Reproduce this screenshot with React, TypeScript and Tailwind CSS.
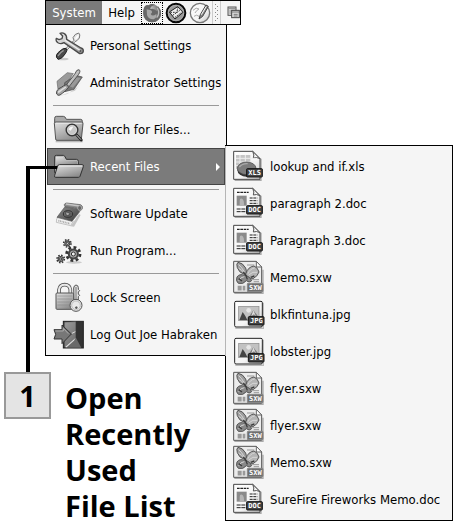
import React from "react";

type IconProps = { children: React.ReactNode };

// every menu icon is drawn on a 90 unit grid
function Icon({ children }: IconProps) {
  return (
    <svg viewBox="0 0 90 90" className="size-[30px] shrink-0 overflow-visible" aria-hidden="true">
      {children}
    </svg>
  );
}

function Gradients() {
  return (
    <svg className="absolute size-0" aria-hidden="true">
      <defs>
        <linearGradient id="metal" x1="0" y1="0" x2="1" y2="1">
          <stop offset="0" stopColor="#f4f4f4" />
          <stop offset="1" stopColor="#8a8a8a" />
        </linearGradient>
        <linearGradient id="folder" x1="0" y1="0" x2="0.6" y2="1">
          <stop offset="0" stopColor="#e2e2e2" />
          <stop offset="1" stopColor="#8c8c8c" />
        </linearGradient>
        <linearGradient id="dark" x1="0" y1="0" x2="1" y2="1">
          <stop offset="0" stopColor="#8d8d8d" />
          <stop offset="1" stopColor="#3c3c3c" />
        </linearGradient>
        <linearGradient id="page" x1="0" y1="0" x2="1" y2="1">
          <stop offset="0" stopColor="#ffffff" />
          <stop offset="0.6" stopColor="#f4f4f4" />
          <stop offset="1" stopColor="#c4c4c4" />
        </linearGradient>
        <radialGradient id="ball" cx="0.35" cy="0.3" r="0.8">
          <stop offset="0" stopColor="#dddddd" />
          <stop offset="0.5" stopColor="#8a8a8a" />
          <stop offset="1" stopColor="#444444" />
        </radialGradient>
      </defs>
    </svg>
  );
}

function ToolsIcon() {
  return (
    <Icon>
      <ellipse cx="26" cy="84" rx="18" ry="4" fill="#c8c8c8" />
      <path d="M34 54 60 28 57 20Q62 8 74 6Q80 10 76 21Q70 30 63 32L38 58Z" fill="#e6e6e6" stroke="#777" strokeWidth="3" />
      <path d="M64 21Q69 12 74 11Q75 18 64 26Z" fill="#fff" />
      <path d="M8 80Q4 70 18 60Q28 50 36 52Q42 58 34 68Q24 84 13 85Z" fill="#4a4a4a" stroke="#222" strokeWidth="3" />
      <path d="M12 75Q18 64 29 58" fill="none" stroke="#999" strokeWidth="4" />
      <path
        d="M7 22Q4 31 13 36Q22 40 30 35L77 68Q87 69 88 60Q88 53 81 51L38 25Q39 13 31 8Q25 4 18 7L26 15 24 23 15 26Z"
        fill="url(#metal)"
        stroke="#4a4a4a"
        strokeWidth="4"
        strokeLinejoin="round"
      />
      <path d="M32 27 78 58" stroke="#eee" strokeWidth="4" />
      <circle cx="79" cy="60" r="3" fill="#555" />
    </Icon>
  );
}

function AdminIcon() {
  return (
    <Icon>
      <path d="M15 84 63 68 84 40 70 58 40 78Z" fill="#cccccc" />
      <path d="M9 40 40 14 58 17 28 58 12 64Z" fill="#9b9b9b" stroke="#666" strokeWidth="2" />
      <path d="M32 44 65 22 85 27 60 64 32 71Z" fill="#777" stroke="#444" strokeWidth="2" />
      <path d="M36 50 66 28 80 30 57 59Z" fill="#999" />
      <path d="M36 52 62 19Q68 3 75 5Q81 8 74 19L42 60Z" fill="url(#metal)" stroke="#555" strokeWidth="3" />
      <path d="M8 78Q5 65 22 58Q36 47 42 52Q47 58 36 67Q24 77 18 81Q11 84 8 78Z" fill="#a4a4a4" stroke="#4b4b4b" strokeWidth="3" />
      <path d="M14 72Q23 65 34 58" fill="none" stroke="#dedede" strokeWidth="5" strokeLinecap="round" />
    </Icon>
  );
}

function SearchFolderIcon() {
  return (
    <Icon>
      <path d="M5 79H86" stroke="#bbb" strokeWidth="6" />
      <path d="M2 10Q2 4 7 4H28Q34 4 37 13H80Q85 13 85 19V30H2Z" fill="#aaa" stroke="#555" strokeWidth="3" />
      <path d="M1 25Q1 21 6 21H82Q88 21 87 26L82 73Q82 76 78 76H9Q5 76 5 72Z" fill="url(#folder)" stroke="#555" strokeWidth="3" />
      <path d="M5 25H83" stroke="#e7e7e7" strokeWidth="3" />
      <path d="M67 59 82 75" stroke="#222" strokeWidth="8" strokeLinecap="round" />
      <path d="M67 59 81 74" stroke="#ccc" strokeWidth="3" />
      <circle cx="54" cy="45" r="17" fill="#c7c7c7" stroke="#333" strokeWidth="5" />
      <circle cx="54" cy="45" r="14" fill="none" stroke="#eee" strokeWidth="2" />
      <path d="M43 43Q48 33 58 35L50 47Z" fill="#f8f8f8" />
    </Icon>
  );
}

function OpenFolderIcon() {
  return (
    <Icon>
      <path d="M2 15Q2 10 7 10H28Q33 10 37 22H67Q73 22 73 28V62H2Z" fill="#bcbcbc" stroke="#303030" strokeWidth="3" />
      <path d="M6 15H27L33 26H69V42H6Z" fill="url(#folder)" />
      <path d="M16 38H85Q90 38 88 44L78 73Q77 76 73 76H5Q0 76 2 70L11 42Q12 38 16 38Z" fill="url(#folder)" stroke="#303030" strokeWidth="3" />
      <path d="M16 42H84" stroke="#f0f0f0" strokeWidth="3" />
    </Icon>
  );
}

function UpdateIcon() {
  return (
    <Icon>
      <path d="M50 82 75 45 80 48 60 83Z" fill="#c4c4c4" />
      <path d="M8 59 17 52 58 66 50 80 7 70Z" fill="#f2f2f2" stroke="#aaa" strokeWidth="2" />
      <path d="M13 65 48 74" stroke="#aaa" strokeWidth="5" strokeDasharray="3 2" />
      <path d="M9 55 33 23 73 30 77 38 54 67Z" fill="url(#dark)" stroke="#555" strokeWidth="2" />
      <path d="M33 23Q27 14 38 12L80 17Q87 20 85 29Q82 36 75 35Q70 25 61 26Z" fill="#8b8b8b" stroke="#555" strokeWidth="2" />
      <path d="M36 15 76 21" stroke="#c5c5c5" strokeWidth="4" />
      <ellipse cx="77" cy="27" rx="6" ry="7" fill="#666" stroke="#bbb" strokeWidth="2" />
      <ellipse cx="42" cy="45" rx="14" ry="10" fill="none" stroke="#333" strokeWidth="3" />
      <path d="M36 38 48 43 42 51 35 46Z" fill="#aaa" stroke="#333" strokeWidth="2" />
    </Icon>
  );
}

function Gear({ cx, cy, r }: { cx: number; cy: number; r: number }) {
  return (
    <g>
      <circle cx={cx} cy={cy} r={r} fill="none" stroke="#333" strokeWidth={r * 0.42} strokeDasharray={`${r * 0.42} ${r * 0.365}`} />
      <circle cx={cx} cy={cy} r={r * 0.68} fill="#aaa" stroke="#444" strokeWidth={r * 0.3} />
      <circle cx={cx} cy={cy} r={r * 0.3} fill="#eee" stroke="#333" strokeWidth="3" />
    </g>
  );
}

function GearsIcon() {
  return (
    <Icon>
      <ellipse cx="60" cy="79" rx="24" ry="4" fill="#ccc" />
      <Gear cx={40} cy={22} r={11} />
      <Gear cx={20} cy={69} r={11} />
      <Gear cx={58} cy={54} r={20} />
    </Icon>
  );
}

function LockIcon() {
  return (
    <Icon>
      <path d="M15 32V20Q17 5 32 5Q47 5 49 20V32" fill="none" stroke="#555" strokeWidth="11" />
      <path d="M15 32V20Q17 5 32 5Q47 5 49 20V32" fill="none" stroke="#e8e8e8" strokeWidth="6" />
      <rect x="6" y="30" width="53" height="49" rx="3" fill="url(#folder)" stroke="#555" strokeWidth="3" />
      <path d="M10 39H55M10 48H55M10 57H55M10 66H55" stroke="#8c8c8c" strokeWidth="2" />
      <path d="M60 51 59 15Q60 7 66 6Q73 7 73 14V19L77 23 73 27V33L77 37 73 41V51Z" fill="#ddd" stroke="#555" strokeWidth="3" />
      <path d="M66 12V49" stroke="#777" strokeWidth="3" />
      <circle cx="66" cy="67" r="18" fill="#e8e8e8" stroke="#555" strokeWidth="3" />
      <circle cx="66" cy="67" r="13" fill="none" stroke="#bbb" strokeWidth="3" />
      <circle cx="67" cy="74" r="5" fill="#555" stroke="#fff" strokeWidth="2" />
    </Icon>
  );
}

function LogOutIcon() {
  return (
    <Icon>
      <rect x="28" y="4" width="60" height="80" fill="#333" stroke="#222" strokeWidth="3" />
      <path d="M32 7 65 5V53L32 82Z" fill="url(#folder)" stroke="#555" strokeWidth="1" />
      <path d="M32 7 65 5V53L32 82Z" fill="#555" fillOpacity="0.5" />
      <path d="M65 52 82 83H33Z" fill="#6a6a6a" />
      <path d="M33 81 65 53 60 62 38 82Z" fill="#ddd" />
      <path d="M54 40 64 35" stroke="#ddd" strokeWidth="3" />
      <path d="M0 29H24V15L52 42 24 71V57H0L5 43Z" fill="#777" stroke="#333" strokeWidth="3" />
      <path d="M4 33H28V25L43 41" fill="none" stroke="#aaa" strokeWidth="3" />
    </Icon>
  );
}

function Page() {
  return (
    <>
      <path d="M5 85H84V20" fill="none" stroke="#aaa" strokeWidth="4" />
      <path d="M2 -2H59L81 20V82H2Z" fill="url(#page)" stroke="#444" strokeWidth="3" />
      <path d="M59 -2Q65 10 61 18Q70 14 81 20Z" fill="#f2f2f2" stroke="#555" strokeWidth="3" />
    </>
  );
}

function Badge({ x, y, label, light }: { x: number; y: number; label: string; light?: boolean }) {
  return (
    <g>
      <rect x={x} y={y} width="47" height="25" rx="2" fill={light ? "#6f6f6f" : "#444"} stroke={light ? "#888" : "#111"} strokeWidth="3" />
      <text x={x + 24} y={y + 20} textAnchor="middle" fontSize="21" fontWeight="700" fill="#fff" className="font-['DejaVu_Sans_Mono',monospace]">
        {label}
      </text>
    </g>
  );
}

function XlsIcon() {
  return (
    <Icon>
      <Page />
      <path d="M9 9H54V50H9Z" fill="#c4c4c4" />
      <path d="M9 19H70M9 30H70M9 41H70M21 9V55M37 9V55M53 9V55" stroke="#eee" strokeWidth="3" />
      <ellipse cx="41" cy="54" rx="28" ry="20" fill="#333" />
      <ellipse cx="41" cy="49" rx="28" ry="19" fill="#7c7c7c" stroke="#444" strokeWidth="2" />
      <path d="M19 45Q28 34 44 35" fill="none" stroke="#aaa" strokeWidth="4" />
      <Badge x={41} y={50} label="XLS" />
    </Icon>
  );
}

function DocIcon() {
  return (
    <Icon>
      <Page />
      <path d="M12 10H47" stroke="#222" strokeWidth="4" strokeDasharray="8 2" />
      <rect x="11" y="20" width="30" height="30" fill="#8a8a8a" />
      <path d="M20 50V36Q20 27 27 29Q34 32 33 50" fill="#b5b5b5" />
      <path d="M50 27H73M50 35H73M50 43H73" stroke="#222" strokeWidth="3" strokeDasharray="9 2" />
      <path d="M11 60H40M11 68H40" stroke="#222" strokeWidth="3" strokeDasharray="12 2" />
      <Badge x={41} y={50} label="DOC" />
    </Icon>
  );
}

function SxwIcon() {
  return (
    <Icon>
      <path d="M4 91H90V20" fill="none" stroke="#aaa" strokeWidth="4" />
      <path d="M2 -5H70L86 12V88H2Z" fill="#ececec" stroke="#555" strokeWidth="3" />
      <path d="M70 -5V12H86Z" fill="#fff" stroke="#666" strokeWidth="3" />
      <path d="M42 6H64M58 50H78M62 56H78" stroke="#999" strokeWidth="3" />
      <path d="M14 72H37M14 79H37" stroke="#999" strokeWidth="7" strokeDasharray="12 3" />
      <path d="M34 34Q18 29 13 14Q9 2 15 -2Q29 -1 38 15Q41 23 40 31Z" fill="#a0a0a0" stroke="#555" strokeWidth="3" />
      <path d="M38 33Q45 11 63 9Q74 13 78 27Q74 40 60 47Q47 51 39 41Z" fill="#b4b4b4" stroke="#555" strokeWidth="3" />
      <path d="M35 37Q19 31 12 42Q7 54 16 61Q31 65 40 53Q49 61 56 53Q53 43 39 37Z" fill="#898989" stroke="#555" strokeWidth="3" />
      <path d="M17 5Q25 10 34 27M17 16Q25 19 32 28M45 32Q51 17 65 15M47 36Q60 24 72 28M17 53Q23 42 34 41" fill="none" stroke="#d6d6d6" strokeWidth="3" />
      <path d="M31 27Q39 35 43 49M53 43 64 39M17 47 27 54" fill="none" stroke="#3c3c3c" strokeWidth="4" />
      <Badge x={43} y={61} label="SXW" light />
    </Icon>
  );
}

function JpgIcon() {
  return (
    <Icon>
      <path d="M7 85H91V8" fill="none" stroke="#bbb" strokeWidth="4" />
      <rect x="5" y="4" width="83" height="77" rx="4" fill="url(#page)" stroke="#222" strokeWidth="3" />
      <rect x="17" y="19" width="61" height="43" fill="#c2c2c2" stroke="#888" strokeWidth="2" />
      <circle cx="47" cy="31" r="7" fill="#e6e6e6" />
      <path d="M19 60 29 36 37 48 43 60Z" fill="#444" />
      <path d="M42 59 61 31 77 51V60Z" fill="#777" />
      <path d="M61 31 55 48 63 43 69 49Z" fill="#ddd" />
      <Badge x={46} y={50} label="JPG" />
    </Icon>
  );
}

const menuGroups = [
  [
    { label: "Personal Settings", icon: <ToolsIcon /> },
    { label: "Administrator Settings", icon: <AdminIcon /> },
  ],
  [
    { label: "Search for Files...", icon: <SearchFolderIcon /> },
    { label: "Recent Files", icon: <OpenFolderIcon />, open: true },
  ],
  [
    { label: "Software Update", icon: <UpdateIcon /> },
    { label: "Run Program...", icon: <GearsIcon /> },
  ],
  [
    { label: "Lock Screen", icon: <LockIcon /> },
    { label: "Log Out Joe Habraken", icon: <LogOutIcon /> },
  ],
];

const recentFiles = [
  { label: "lookup and if.xls", icon: <XlsIcon /> },
  { label: "paragraph 2.doc", icon: <DocIcon /> },
  { label: "Paragraph 3.doc", icon: <DocIcon /> },
  { label: "Memo.sxw", icon: <SxwIcon /> },
  { label: "blkfintuna.jpg", icon: <JpgIcon /> },
  { label: "lobster.jpg", icon: <JpgIcon /> },
  { label: "flyer.sxw", icon: <SxwIcon /> },
  { label: "flyer.sxw", icon: <SxwIcon /> },
  { label: "Memo.sxw", icon: <SxwIcon /> },
  { label: "SureFire Fireworks Memo.doc", icon: <DocIcon /> },
];

function MenuBar() {
  return (
    <nav className="flex h-[25px] w-[196px] items-center border border-black bg-[#f5f5f5]">
      <button className="h-full w-14 shrink-0 bg-[#7b7b7b] text-white">System</button>
      <button className="h-full w-[39px] shrink-0">Help</button>
      <button aria-label="Web Browser" className="flex size-[22px] shrink-0 items-center justify-center border border-dotted border-black">
        <svg viewBox="0 0 60 60" className="size-5">
          <circle cx="30" cy="31" r="27" fill="url(#ball)" />
          <path d="M5 17Q9 3 20 7Q27 0 40 5Q24 9 25 18Q36 14 45 25Q50 16 48 9Q61 24 55 42Q47 58 30 58Q12 57 6 40Q2 27 5 17Z" fill="#686868" />
          <path d="M14 19 27 22Q34 28 26 33Q31 42 43 33Q46 44 35 49Q20 50 15 36Z" fill="#a8a8a8" />
          <path d="M46 15Q55 31 44 44" fill="none" stroke="#bbb" strokeWidth="4" />
        </svg>
      </button>
      <button aria-label="Mail" className="ml-0.5 shrink-0">
        <svg viewBox="0 0 66 66" className="size-[22px]">
          <circle cx="33" cy="33" r="28" fill="#999" stroke="#080808" strokeWidth="6" />
          <circle cx="33" cy="33" r="23" fill="none" stroke="#aaa" strokeWidth="3" />
          <path d="M13 30 38 14 54 31 30 51Z" fill="#eee" stroke="#222" strokeWidth="3" />
          <path d="M16 31 36 31 38 16M23 40 45 25M30 46 50 31" fill="none" stroke="#333" strokeWidth="3" strokeDasharray="5 3" />
        </svg>
      </button>
      <button aria-label="Word Processor" className="ml-0.5 shrink-0">
        <svg viewBox="0 0 66 66" className="size-[22px]">
          <circle cx="33" cy="33" r="29" fill="url(#page)" stroke="#777" strokeWidth="4" />
          <path d="M12 25Q22 14 30 21Q22 25 18 33M15 43Q23 36 30 43" fill="none" stroke="#aaa" strokeWidth="3" />
          <path d="M30 51 34 38 51 9 58 13 41 43Z" fill="#888" stroke="#444" strokeWidth="3" />
          <path d="M37 38 52 13" stroke="#fff" strokeWidth="3" />
        </svg>
      </button>
      <svg viewBox="0 0 9 23" className="ml-px h-[23px] w-[9px] shrink-0" aria-hidden="true">
        <path d="M.5 0V23M8.500 0V23" stroke="#ccc" />
        <path d="M3.500 3V21" stroke="#888" strokeDasharray="1 3" />
        <path d="M5.500 5V21" stroke="#888" strokeDasharray="1 3" />
      </svg>
      <button aria-label="Window List" className="ml-auto shrink-0">
        <svg viewBox="0 0 39 39" className="size-[13px]">
          <rect x="3" y="3" width="24" height="25" fill="#ddd" stroke="#555" strokeWidth="3" />
          <path d="M3 8H27M7 15H22M7 21H22" stroke="#888" strokeWidth="3" />
          <rect x="14" y="13" width="23" height="22" fill="#ddd" stroke="#444" strokeWidth="3" />
          <path d="M14 18H37M20 25H32M20 30H32" stroke="#777" strokeWidth="3" />
        </svg>
      </button>
    </nav>
  );
}

function RecentFilesMenu() {
  return (
    <ul className="absolute -top-[3px] left-full w-[228px] border border-black bg-[#f5f5f5] py-0.5 text-black">
      {/* shared edge with the parent menu */}
      <li role="presentation" className="absolute top-0 -left-px h-[210px] w-px bg-[#b5b5b5]" />
      {recentFiles.map((file, i) => (
        <li key={i}>
          <button className="flex h-[37px] w-full items-center gap-[7px] pl-[7px] text-left whitespace-nowrap">
            {file.icon}
            {file.label}
          </button>
        </li>
      ))}
    </ul>
  );
}

function SystemMenu() {
  return (
    <div className="w-[182px] border-x border-b border-black bg-[#f5f5f5] px-px py-0.5">
      {menuGroups.map((group, i) => (
        <React.Fragment key={i}>
          {i > 0 && <hr className="mx-1.5 mt-1 mb-[5px] border-t border-[#999]" />}
          <ul>
            {group.map((item) => (
              <li key={item.label} className="relative">
                <button
                  className={
                    item.open
                      ? "flex h-[37px] w-full items-center gap-1.5 border border-[#444] bg-[#7b7b7b] pl-1.5 text-left whitespace-nowrap text-white"
                      : "flex h-[37px] w-full items-center gap-1.5 pl-[7px] text-left whitespace-nowrap"
                  }
                >
                  {item.icon}
                  {item.label}
                  {item.open && (
                    <svg viewBox="0 0 4 8" className="mr-1 ml-auto h-2 w-1" aria-hidden="true">
                      <path d="M0 0 4 4 0 8Z" fill="#fff" />
                    </svg>
                  )}
                </button>
                {item.open && (
                  <>
                    <RecentFilesMenu />
                    <span className="pointer-events-none absolute top-[18px] -left-[21px] h-[206px] w-[31px] border-t-3 border-l-4 border-black" />
                  </>
                )}
              </li>
            ))}
          </ul>
        </React.Fragment>
      ))}
    </div>
  );
}

export default function App() {
  return (
    <main className="min-h-screen bg-white font-['DejaVu_Sans_Condensed','DejaVu_Sans',sans-serif] text-[13px] leading-4 text-black">
      <Gradients />
      <div className="pl-[45px]">
        <MenuBar />
        <SystemMenu />
      </div>
      <section className="flex items-start gap-[14px] pt-4 pl-1 font-['Open_Sans',sans-serif] font-bold">
        <span className="flex size-[47px] shrink-0 items-center justify-center border-2 border-[#999] bg-[#e4e4e4] text-[29px] leading-9">
          1
        </span>
        <h1 className="pt-2 text-[29px] leading-9">
          <span className="block">Open</span>
          <span className="block">Recently</span>
          <span className="block">Used</span>
          <span className="block">File List</span>
        </h1>
      </section>
    </main>
  );
}
